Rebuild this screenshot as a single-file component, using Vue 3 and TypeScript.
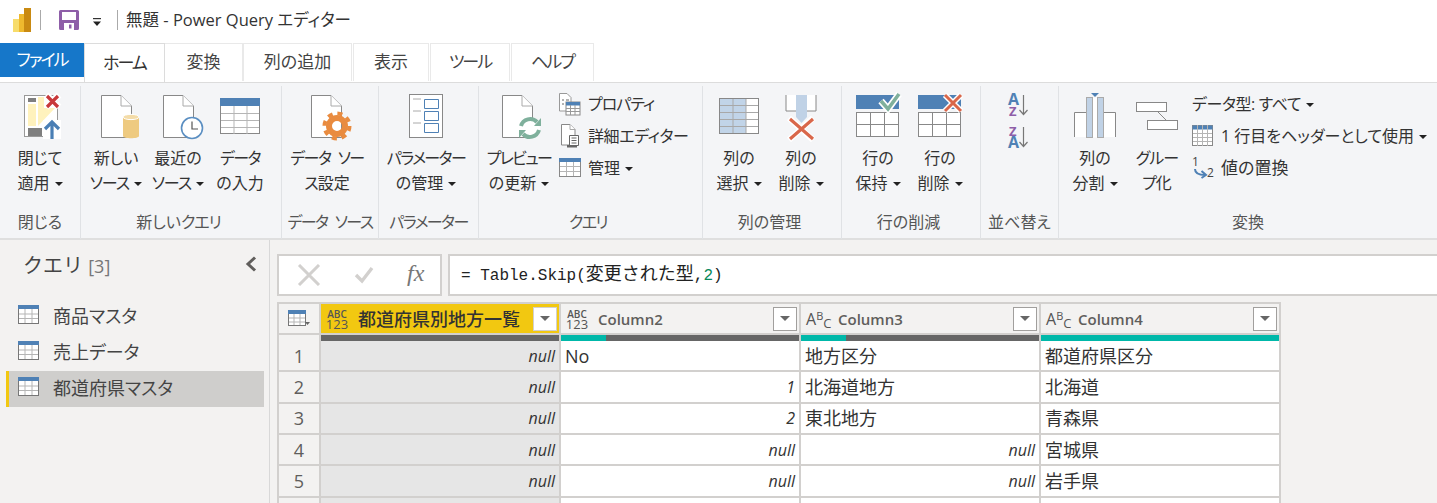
<script setup lang="ts">
interface Row { no: number; a: string; b: string; c: string; d: string }

const queries = ['商品マスタ', '売上データ', '都道府県マスタ']

const rows: Row[] = [
  { no: 1, a: 'null', b: 'No', c: '地方区分', d: '都道府県区分' },
  { no: 2, a: 'null', b: '1', c: '北海道地方', d: '北海道' },
  { no: 3, a: 'null', b: '2', c: '東北地方', d: '青森県' },
  { no: 4, a: 'null', b: 'null', c: 'null', d: '宮城県' },
  { no: 5, a: 'null', b: 'null', c: 'null', d: '岩手県' },
  { no: 6, a: '', b: '', c: '', d: '' },
]

const isNum = (v: string) => v === 'null' || /^\d+$/.test(v)
</script>

<template>
  <div class="app">
    <div class="titlebar">
      <svg class="logo" width="20" height="26" viewBox="0 0 20 26">
        <rect x="0" y="11" width="9" height="13" fill="#f7dc6b" />
        <rect x="6" y="6" width="8" height="18" fill="#eeb92e" />
        <rect x="11" y="0" width="7" height="24" fill="#c98a12" />
      </svg>
      <i class="tsep"></i>
      <svg class="save" width="20" height="20" viewBox="0 0 20 20">
        <path d="M0 1.500A1.500 1.500 0 0 1 1.500 0H18.500A1.500 1.500 0 0 1 20 1.500V18.500A1.500 1.500 0 0 1 18.500 20H1.500A1.500 1.500 0 0 1 0 18.500Z" fill="#8e5ea8" />
        <rect x="3" y="2" width="14" height="8" fill="#fff" />
        <rect x="5" y="13" width="10" height="7" fill="#fff" />
        <rect x="10" y="14.500" width="2.500" height="4" fill="#8e5ea8" />
      </svg>
      <svg class="qat" width="10" height="9" viewBox="0 0 10 9">
        <rect x="1" y="0" width="8" height="1.200" fill="#333" />
        <path d="M1 3.500H9L5 8Z" fill="#222" />
      </svg>
      <i class="tsep second"></i>
      <span class="title">無題 - Power Query エディター</span>
    </div>

    <div class="tabs">
      <div class="tab file"><span class="kk">ファイル</span></div>
      <div class="tab active"><span class="kk">ホーム</span></div>
      <div class="tab t2">変換</div>
      <div class="tab t3">列の追加</div>
      <div class="tab t4">表示</div>
      <div class="tab t5"><span class="kk">ツール</span></div>
      <div class="tab t6"><span class="kk">ヘルプ</span></div>
    </div>

    <div class="ribbon">
      <section class="group" style="width: 81px">
        <div class="items">
          <div class="big wide">
            <svg class="ico s3" width="38" height="46" viewBox="0 0 38 46">
              <rect x="0.500" y="2.500" width="33" height="41" fill="#fff" stroke="#999" />
              <rect x="4" y="5" width="8" height="4" fill="#7f7f7f" />
              <path d="M4 11H12V33H4ZM14 4H20V15H31L14 33Z" fill="#fff2bd" />
              <rect x="4" y="35" width="14" height="8" fill="#7f7f7f" />
              <path d="M22 2L35 14M35 2L22 14" stroke="#fff" stroke-width="7" />
              <path d="M23 3L34 14M34 3L23 14" stroke="#c8383a" stroke-width="3.200" />
              <rect x="19" y="27" width="18" height="19" fill="#fff" />
              <path d="M28 46V29M21 36L28 29L35 36" fill="none" stroke="#4a7fb5" stroke-width="3.200" />
            </svg>
            <span>閉じて<br />適用<b class="caret"></b></span>
          </div>
        </div>
        <footer>閉じる</footer>
      </section>

      <section class="group" style="width: 201px">
        <div class="items pl4">
          <div class="big">
            <svg class="ico s5" width="42" height="46" viewBox="0 0 42 46">
              <path d="M1.500 2.500H21L31.500 13V44.500H1.500Z" fill="#fff" stroke="#888" />
              <path d="M21 2.500V13H31.500" fill="#fff" stroke="#aaa" />
              <path d="M23 24C23 21 39 21 39 24V43C39 46 23 46 23 43Z" fill="#eeca80" />
              <ellipse cx="31" cy="24" rx="8" ry="2.600" fill="#f4dca8" stroke="#fff" />
            </svg>
            <span>新しい<br /><span class="k1">ソース</span><b class="caret"></b></span>
          </div>
          <div class="big">
            <svg class="ico s5" width="42" height="46" viewBox="0 0 42 46">
              <path d="M1.500 2.500H21L31.500 13V44.500H1.500Z" fill="#fff" stroke="#888" />
              <path d="M21 2.500V13H31.500" fill="#fff" stroke="#aaa" />
              <circle cx="30" cy="35" r="10.500" fill="#fff" stroke="#5b8fc2" stroke-width="1.600" />
              <path d="M30 28.500V36H36" fill="none" stroke="#555" stroke-width="1.200" />
            </svg>
            <span>最近の<br /><span class="k1">ソース</span><b class="caret"></b></span>
          </div>
          <div class="big">
            <svg class="ico" width="40" height="46" viewBox="0 0 40 46">
              <rect x="0.500" y="6.500" width="39" height="34" fill="#fff" stroke="#888" />
              <rect x="0" y="5" width="40" height="8" fill="#4f81b5" />
              <path d="M14 13V41M27 13V41M1 20.500H39M1 27.500H39M1 34.500H39" stroke="#b5b5b5" />
            </svg>
            <span><span class="k">データ</span><br />の入力</span>
          </div>
        </div>
        <footer class="nudge">新しい<span class="k1">クエリ</span></footer>
      </section>

      <section class="group" style="width: 97px">
        <div class="items pl5">
          <div class="big wide">
            <svg class="ico s4" width="42" height="46" viewBox="0 0 42 46">
              <path d="M1.500 2.500H21L31.500 13V44.500H1.500Z" fill="#fff" stroke="#888" />
              <path d="M21 2.500V13H31.500" fill="#fff" stroke="#aaa" />
              <circle cx="27" cy="33" r="8" fill="none" stroke="#e98b3f" stroke-width="6" />
              <circle cx="27" cy="33" r="12.500" fill="none" stroke="#e98b3f" stroke-width="4" stroke-dasharray="5 4.820" />
            </svg>
            <span><span class="k sp">データ ソー</span><br /><span class="k1">ス</span>設定</span>
          </div>
        </div>
        <footer><span class="k sp">データ ソース</span></footer>
      </section>

      <section class="group" style="width: 100px">
        <div class="items pl7">
          <div class="big wide">
            <svg class="ico" width="34" height="46" viewBox="0 0 34 46">
              <rect x="0.500" y="1.500" width="33" height="43" fill="#fff" stroke="#888" />
              <path d="M4 6H12M4 18H12M4 30H12" stroke="#aaa" />
              <path d="M15.500 6.500H29.500V15.500H15.500ZM15.500 18.500H29.500V27.500H15.500ZM15.500 30.500H29.500V39.500H15.500Z" fill="#fff" stroke="#4f81b5" />
            </svg>
            <span><span class="k">パラメーター</span><br />の管理<b class="caret"></b></span>
          </div>
        </div>
        <footer><span class="k">パラメーター</span></footer>
      </section>

      <section class="group" style="width: 224px">
        <div class="items pl7">
          <div class="big mid">
            <svg class="ico s3" width="42" height="46" viewBox="0 0 42 46">
              <path d="M1.500 2.500H21L31.500 13V44.500H1.500Z" fill="#fff" stroke="#888" />
              <path d="M21 2.500V13H31.500" fill="#fff" stroke="#aaa" />
              <circle cx="29" cy="35" r="10" fill="#fff" />
              <path d="M20 33A9.500 9.500 0 0 1 36 29M38 37A9.500 9.500 0 0 1 22 41" fill="none" stroke="#7fb09c" stroke-width="4" />
              <path d="M33 33H40V25ZM25 37H18V45Z" fill="#7fb09c" />
            </svg>
            <span><span class="k">プレビュー</span><br />の更新<b class="caret"></b></span>
          </div>
          <div class="small-col">
            <div class="small">
              <svg width="22" height="22" viewBox="0 0 22 22">
                <path d="M0.500 0.500H8L12 4.500V18H0.500Z" fill="#fff" stroke="#999" />
                <path d="M3 7H5M7 7H10M3 11H5" stroke="#666" />
                <rect x="7" y="9" width="14" height="13" fill="#fff" stroke="#888" />
                <rect x="7" y="9" width="14" height="3.500" fill="#4f81b5" />
                <path d="M11.500 12V22M16 12V22M7 15.500H21M7 18.500H21" stroke="#999" />
              </svg>
              <span class="k1">プロパティ</span>
            </div>
            <div class="small">
              <svg class="adv" width="22" height="24" viewBox="0 0 22 24">
                <path d="M0.500 0.500H9L14 5.500V21H0.500Z" fill="#fff" stroke="#888" />
                <path d="M9 0.500V5.500H14" fill="#fff" stroke="#aaa" />
                <path d="M8.500 11.500H17.500V21.500H8.500Z" fill="#fff" stroke="#666" />
                <path d="M10.500 14H15.500M10.500 16.500H15.500M10.500 19H15.500" stroke="#666" />
                <rect x="6" y="21" width="10" height="2.500" fill="#666" />
              </svg>
              <span class="k0">詳細エディター</span>
            </div>
            <div class="small">
              <svg width="22" height="20" viewBox="0 0 22 20">
                <rect x="0.500" y="1.500" width="21" height="17" fill="#fff" stroke="#888" />
                <rect x="0" y="0" width="22" height="4" fill="#4f81b5" />
                <path d="M7.500 4V18M14.500 4V18M1 8.500H21M1 13.500H21" stroke="#b5b5b5" />
              </svg>
              <span>管理<b class="caret"></b></span>
            </div>
          </div>
        </div>
        <footer class="nudge"><span class="k">クエリ</span></footer>
      </section>

      <section class="group" style="width: 139px">
        <div class="items pl5">
          <div class="big">
            <svg class="ico" width="40" height="46" viewBox="0 0 40 46">
              <rect x="0.500" y="5.500" width="39" height="35" fill="#fff" stroke="#888" />
              <rect x="1" y="6" width="26" height="34" fill="#c1d4e8" />
              <path d="M14 6V40M27 6V40M1 12.500H39M1 19.500H39M1 26.500H39M1 33.500H39" stroke="#a8a8a8" />
            </svg>
            <span>列の<br />選択<b class="caret"></b></span>
          </div>
          <div class="big">
            <svg class="ico" width="32" height="46" viewBox="0 0 32 46">
              <path d="M1 2V18H31V2" fill="#fff" stroke="#888" />
              <path d="M11 2H22V24L16.500 30L11 24Z" fill="#c0d2e6" />
              <path d="M4 25L28 47M28 25L4 47" stroke="#fff" stroke-width="6" />
              <path d="M5 26L28 46M28 26L5 46" stroke="#d9674a" stroke-width="3.200" />
            </svg>
            <span>列の<br />削除<b class="caret"></b></span>
          </div>
        </div>
        <footer class="nudge">列の管理</footer>
      </section>

      <section class="group" style="width: 139px">
        <div class="items pl5">
          <div class="big">
            <svg class="ico" width="46" height="46" viewBox="0 0 46 46">
              <rect x="1" y="2" width="43" height="14" fill="#4f81b5" />
              <rect x="1.500" y="19.500" width="42" height="24" fill="#fff" stroke="#888" />
              <path d="M15.500 20V44M29.500 20V44M2 31.500H43" stroke="#888" />
              <path d="M26 8L33 16L44 1" fill="none" stroke="#fff" stroke-width="7" />
              <path d="M26 8L33 16L44 1" fill="none" stroke="#7fb09c" stroke-width="3.600" />
            </svg>
            <span>行の<br />保持<b class="caret"></b></span>
          </div>
          <div class="big">
            <svg class="ico" width="46" height="46" viewBox="0 0 46 46">
              <rect x="1" y="2" width="43" height="14" fill="#4f81b5" />
              <rect x="1.500" y="19.500" width="42" height="24" fill="#fff" stroke="#888" />
              <path d="M15.500 20V44M29.500 20V44M2 31.500H43" stroke="#888" />
              <path d="M28 2L44 18M44 2L28 18" stroke="#fff" stroke-width="6" />
              <path d="M28 2L44 18M44 2L28 18" stroke="#d9674a" stroke-width="3" />
            </svg>
            <span>行の<br />削除<b class="caret"></b></span>
          </div>
        </div>
        <footer class="nudge">行の削減</footer>
      </section>

      <section class="group" style="width: 78px">
        <div class="items sort">
          <svg width="22" height="24" viewBox="0 0 22 24">
            <text x="0" y="11.500" class="az blue">A</text>
            <text x="1" y="22.500" class="az small-z purple">Z</text>
            <path d="M15.500 2V21M11.500 17L15.500 21.500L19.500 17" fill="none" stroke="#777" stroke-width="1.200" />
          </svg>
          <svg width="22" height="24" viewBox="0 0 22 24">
            <text x="1" y="10.500" class="az small-z purple">Z</text>
            <text x="0" y="22.500" class="az blue">A</text>
            <path d="M15.500 2V21M11.500 17L15.500 21.500L19.500 17" fill="none" stroke="#777" stroke-width="1.200" />
          </svg>
        </div>
        <footer>並べ替え</footer>
      </section>

      <section class="group last">
        <div class="items pl5">
          <div class="big">
            <svg class="ico" width="42" height="46" viewBox="0 0 42 46">
              <path d="M0.500 44V19.500H41.500V44" fill="#fff" stroke="#888" />
              <rect x="12.500" y="4.500" width="17" height="40" fill="#fff" />
              <rect x="12.500" y="4.500" width="6" height="40" fill="#c0d2e6" stroke="#aaa" />
              <rect x="23.500" y="4.500" width="6" height="40" fill="#c0d2e6" stroke="#aaa" />
              <path d="M17 0H25L21 4Z" fill="#4f81b5" />
            </svg>
            <span>列の<br />分割<b class="caret"></b></span>
          </div>
          <div class="big">
            <svg class="ico" width="42" height="46" viewBox="0 0 42 46">
              <rect x="0.500" y="9.500" width="30" height="9" fill="#fff" stroke="#888" />
              <rect x="11.500" y="27.500" width="30" height="9" fill="#fff" stroke="#888" />
              <path d="M22 19L30 27" stroke="#888" />
            </svg>
            <span><span class="k1">グルー</span><br /><span class="k1">プ</span>化</span>
          </div>
          <div class="small-col right">
            <div class="small"><span class="k0">データ型: すべて<b class="caret"></b></span></div>
            <div class="small">
              <svg width="22" height="22" viewBox="0 0 22 22">
                <rect x="0.500" y="0.500" width="20" height="20" fill="#fff" stroke="#888" />
                <rect x="0.500" y="0.500" width="20" height="4" fill="#4f81b5" />
                <path d="M5.500 0V21M10.500 0V21M15.500 0V21M1 8.500H20M1 12.500H20M1 16.500H20" stroke="#b5b5b5" />
              </svg>
              <span>1 行目をヘッダーとして使用<b class="caret"></b></span>
            </div>
            <div class="small replace">
              <svg width="24" height="24" viewBox="0 0 24 24">
                <text x="0" y="10" class="digit">1</text>
                <text x="15" y="21" class="digit">2</text>
                <path d="M3 13C3 18 7 19 13 19" fill="none" stroke="#4f81b5" stroke-width="2" />
                <path d="M9.500 15L14 19L9.500 22" fill="none" stroke="#4f81b5" stroke-width="2" />
              </svg>
              <span class="wide-txt">値の置換</span>
            </div>
          </div>
        </div>
        <footer>変換</footer>
      </section>
    </div>

    <div class="body">
      <aside class="side">
        <div class="side-head">
          <span>クエリ <em>[3]</em></span>
          <svg width="12" height="16" viewBox="0 0 12 16">
            <path d="M10 1.500L3 8L10 14.500" fill="none" stroke="#605e5c" stroke-width="3" />
          </svg>
        </div>
        <ul class="qlist">
          <li v-for="(q, i) in queries" :key="q" :class="{ sel: i === 2 }">
            <svg width="22" height="19" viewBox="0 0 22 19">
              <rect x="0.500" y="0.500" width="20" height="18" fill="#fff" stroke="#777" />
              <rect x="0" y="0" width="21" height="4" fill="#4f81b5" />
              <path d="M7 4V18M14 4V18M1 9H20M1 13.500H20" stroke="#b5b5b5" />
            </svg>
            <span>{{ q }}</span>
          </li>
        </ul>
      </aside>

      <main class="main">
        <div class="fbar">
          <div class="fbtns">
            <svg width="24" height="22" viewBox="0 0 24 22">
              <path d="M2 1L22 21M22 1L2 21" stroke="#d2d0ce" stroke-width="3" />
            </svg>
            <svg width="20" height="18" viewBox="0 0 20 18">
              <path d="M2 9L8 15L18 2" fill="none" stroke="#d2d0ce" stroke-width="3.400" />
            </svg>
            <span class="fx">fx</span>
          </div>
          <div class="finput">= Table.Skip(<span class="cjk">変更された型</span>,<span class="num">2</span>)</div>
        </div>

        <div class="grid">
          <div class="hcell corner">
            <svg width="22" height="18" viewBox="0 0 22 18">
              <rect x="0.500" y="0.500" width="17" height="15" fill="#fff" stroke="#777" />
              <rect x="0" y="0" width="18" height="4" fill="#4f81b5" />
              <path d="M6 4V15M12 4V15M1 8H17M1 12H17" stroke="#b5b5b5" />
              <path d="M17 12H22L19.500 15Z" fill="#666" />
            </svg>
          </div>
          <div class="hcell selected">
            <span class="type any"><i>ABC</i><i>123</i></span>
            <span class="hname big-h">都道府県別地方一覧</span>
            <span class="drop"><b></b></span>
          </div>
          <div class="hcell">
            <span class="type any"><i>ABC</i><i>123</i></span>
            <span class="hname">Column2</span>
            <span class="drop"><b></b></span>
          </div>
          <div class="hcell">
            <span class="type txt">A<sup>B</sup><sub>C</sub></span>
            <span class="hname">Column3</span>
            <span class="drop"><b></b></span>
          </div>
          <div class="hcell">
            <span class="type txt">A<sup>B</sup><sub>C</sub></span>
            <span class="hname">Column4</span>
            <span class="drop"><b></b></span>
          </div>

          <div class="qcell blank"></div>
          <div class="qcell"></div>
          <div class="qcell"><i class="ok" style="width: 19%"></i></div>
          <div class="qcell"><i class="ok" style="width: 19%"></i></div>
          <div class="qcell"><i class="ok" style="width: 100%"></i></div>

          <template v-for="r in rows" :key="r.no">
            <div class="cell rowno">{{ r.no === 6 ? '' : r.no }}</div>
            <div class="cell sel-col" :class="{ nul: r.a === 'null' }">{{ r.a }}</div>
            <div class="cell" :class="{ nul: isNum(r.b) }">{{ r.b }}</div>
            <div class="cell" :class="{ nul: isNum(r.c) }">{{ r.c }}</div>
            <div class="cell" :class="{ nul: isNum(r.d) }">{{ r.d }}</div>
          </template>
        </div>
      </main>
    </div>
  </div>
</template>

<style>
html, body {
  margin: 0;
  background: #fff;
}
</style>

<style scoped>
.app {
  width: 1437px;
  height: 503px;
  overflow: hidden;
  display: flex;
  flex-direction: column;
  font-family: "Open Sans", "Noto Sans CJK JP", sans-serif;
  font-feature-settings: "palt";
  font-size: 16px;
  color: #333;
}

.k { letter-spacing: -1.6px; }
.k1 { letter-spacing: -1px; }
.k0 { letter-spacing: -0.4px; }
.kk { letter-spacing: -2px; }
.sp { word-spacing: 5px; }
.wide-txt { font-size: 17px; }

.titlebar {
  height: 43px;
  flex: none;
  display: flex;
  align-items: center;
  background: #fff;
  padding-left: 13px;
  box-sizing: border-box;
}
.logo { margin-top: -2px; }
.tsep {
  width: 1px;
  height: 20px;
  background: #aaa;
  margin: -4px 0 0 7px;
}
.tsep.second { margin-left: 15px; }
.save { margin: -3px 0 0 18px; }
.qat { margin: 2px 0 0 13px; }
.title {
  margin: -3px 0 0 8px;
  color: #333;
  font-size: 16.500px;
  line-height: 24px;
}

.tabs {
  height: 39px;
  flex: none;
  display: flex;
  align-items: flex-start;
  background: #fff;
  position: relative;
  font-size: 17px;
}
.tab {
  height: 38px;
  box-sizing: border-box;
  border: 1px solid #e9e9e9;
  border-bottom: none;
  display: flex;
  align-items: center;
  justify-content: center;
  color: #444;
  line-height: 24px;
  margin-right: 1px;
  padding-bottom: 1px;
}
.tab.file {
  width: 84px;
  height: 34px;
  background: #1677c9;
  border: none;
  color: #fff;
  margin: 0;
}
.tab.active {
  width: 81px;
  height: 39px;
  border-color: #dcdcdc;
  margin: 0;
  position: relative;
  z-index: 2;
  background: #fff;
  color: #333;
}
.t2 { width: 78px; border-left: none; margin-right: 0; }
.t3 { width: 109px; }
.t4 { width: 76px; }
.t5 { width: 80px; }
.t6 { width: 83px; }

.ribbon {
  height: 158px;
  flex: none;
  display: flex;
  background: #f4f5f7;
  border-top: 1px solid #dcdcdc;
  border-bottom: 2px solid #dfdfdf;
  box-sizing: border-box;
  padding: 3px 0 0;
}
.group {
  box-sizing: border-box;
  border-right: 1px solid #e0e2e5;
  height: 153px;
  display: flex;
  flex-direction: column;
  flex: none;
}
.group.last { border-right: none; flex: 1; }
.items {
  height: 123px;
  display: flex;
  align-items: flex-start;
  flex: none;
}
.pl4 { padding-left: 4px; }
.pl5 { padding-left: 5px; }
.pl7 { padding-left: 7px; }
.group footer {
  height: 30px;
  text-align: center;
  line-height: 26px;
  color: #555;
  flex: none;
}
.group footer.nudge { padding-right: 5px; }
.big {
  width: 62px;
  flex: none;
  display: flex;
  flex-direction: column;
  align-items: center;
  text-align: center;
  line-height: 25px;
  color: #333;
  white-space: nowrap;
}
.big.wide { width: 80px; }
.big.mid { width: 66px; }
.ico {
  height: 46px;
  margin: 7px 0 7px;
  display: block;
  overflow: visible;
}
.ico.s3 { margin-left: 6px; }
.ico.s4 { margin-left: 8px; }
.ico.s5 { margin-left: 10px; }
.caret {
  display: inline-block;
  width: 0;
  height: 0;
  border: 4px solid transparent;
  border-top: 4px solid #222;
  border-bottom: none;
  margin-left: 5px;
  vertical-align: 3px;
}

.small-col {
  display: flex;
  flex-direction: column;
  margin-left: 7px;
  padding-top: 2px;
}
.small-col.right { margin-left: 4px; }
.small {
  height: 32px;
  display: flex;
  align-items: center;
  gap: 7px;
  white-space: nowrap;
  color: #333;
  line-height: 24px;
}
.small svg { flex: none; overflow: visible; }
.small .adv { margin-left: 2px; margin-right: -2px; }
.small.replace { gap: 5px; }

.sort {
  flex-direction: column;
  align-items: flex-start;
  gap: 8px;
  padding: 7px 0 0 27px;
  box-sizing: border-box;
}
.sort svg { overflow: visible; }
.az {
  font-family: "Open Sans", sans-serif;
  font-weight: 700;
  font-size: 16px;
}
.az.small-z { font-size: 13px; }
.blue { fill: #4f81b5; }
.purple { fill: #8e5ea8; }
.digit {
  font-family: "Open Sans", sans-serif;
  font-size: 12px;
  fill: #444;
}

.body {
  flex: 1;
  display: flex;
  min-height: 0;
  background: #f3f2f1;
}
.side {
  width: 270px;
  flex: none;
  box-sizing: border-box;
  border-right: 1px solid #d8d8d8;
  background: #f3f2f1;
}
.side-head {
  height: 48px;
  padding: 0 12px 0 23px;
  display: flex;
  align-items: center;
  justify-content: space-between;
  font-size: 20px;
  font-feature-settings: normal;
  color: #444;
}
.side-head em {
  font-style: normal;
  color: #777;
  font-size: 18px;
}
.qlist {
  list-style: none;
  margin: 11px 0 0;
  padding: 0;
}
.qlist li {
  height: 36px;
  width: 258px;
  margin-left: 6px;
  box-sizing: border-box;
  border-left: 3px solid transparent;
  padding-left: 9px;
  display: flex;
  align-items: center;
  gap: 13px;
  color: #444;
  font-size: 18px;
  line-height: 24px;
}
.qlist li span { margin-top: -2px; }
.qlist li svg { margin-top: -6px; }
.qlist li.sel {
  background: #cfcecc;
  border-left-color: #f2c811;
}

.main {
  flex: 1;
  min-width: 0;
  padding: 14px 0 0 7px;
}
.fbar {
  display: flex;
  height: 42px;
  gap: 6px;
}
.fbtns {
  width: 165px;
  box-sizing: border-box;
  border: 2px solid #d2d0ce;
  background: #fff;
  display: flex;
  align-items: center;
  padding-left: 18px;
  gap: 33px;
  flex: none;
}
.fx {
  font-family: "Liberation Serif", serif;
  font-style: italic;
  font-size: 24px;
  color: #777;
  line-height: 22px;
  margin-top: -4px;
}
.finput {
  flex: 1;
  box-sizing: border-box;
  border: 2px solid #d2d0ce;
  border-right: none;
  background: #fff;
  padding: 2px 0 0 11px;
  font-family: "Liberation Mono", monospace;
  font-size: 16px;
  line-height: 36px;
  color: #222;
}
.finput .cjk {
  font-family: "Noto Sans CJK JP", sans-serif;
  font-size: 18px;
  font-feature-settings: normal;
  line-height: 20px;
}
.finput .num { color: #09885a; }

.grid {
  display: grid;
  grid-template-columns: 42px 240px 240px 240px 240px;
  grid-template-rows: 31px 6px;
  grid-auto-rows: 31.330px;
  width: 1004px;
  margin-top: 6px;
  border-top: 2px solid #d2d0ce;
  border-left: 2px solid #d2d0ce;
  box-sizing: border-box;
  background: #d2d0ce;
}
.hcell {
  box-sizing: border-box;
  background: #f3f2f1;
  border-right: 2px solid #d2d0ce;
  border-bottom: 2px solid #d2d0ce;
  display: flex;
  align-items: center;
  padding: 0 2px 0 5px;
  min-width: 0;
}
.corner { justify-content: center; padding: 0; }
.hcell.selected {
  background: #f2c811;
  color: #333;
}
.type {
  flex: none;
  width: 22px;
  color: #555;
  font-family: "Open Sans", sans-serif;
}
.type.any {
  display: flex;
  flex-direction: column;
  align-items: center;
  font-size: 10px;
  line-height: 10px;
  font-weight: 600;
}
.type.any i { font-style: normal; }
.type.any i:last-child { font-size: 13px; font-weight: 400; }
.type.txt {
  font-size: 16px;
  line-height: 20px;
  white-space: nowrap;
}
.type.txt sup { font-size: 11px; vertical-align: 5px; line-height: 0; }
.type.txt sub { font-size: 13px; vertical-align: -3px; line-height: 0; }
.hname {
  flex: 1;
  margin-left: 10px;
  font-weight: 600;
  font-size: 15px;
  color: #605e5c;
  white-space: nowrap;
}
.hname.big-h {
  font-size: 18px;
  font-weight: 500;
  color: #333;
  line-height: 24px;
}
.drop {
  flex: none;
  width: 24px;
  height: 24px;
  box-sizing: border-box;
  background: #fff;
  border: 1px solid #a19f9d;
  display: flex;
  align-items: center;
  justify-content: center;
}
.selected .drop { border-color: #d2d0ce; }
.drop b {
  width: 0;
  height: 0;
  border: 5px solid transparent;
  border-top: 5px solid #666;
  border-bottom: none;
}
.qcell {
  background: #666;
  border-right: 2px solid #d2d0ce;
}
.qcell.blank {
  background: #f3f2f1;
}
.qcell .ok {
  display: block;
  height: 100%;
  background: #00b8a9;
}
.cell {
  box-sizing: border-box;
  background: #fff;
  border-right: 2px solid #d2d0ce;
  border-bottom: 2px solid #d2d0ce;
  padding: 0 4px;
  display: flex;
  align-items: center;
  color: #333;
  font-size: 18px;
  line-height: 24px;
  white-space: nowrap;
}
.cell.nul {
  justify-content: flex-end;
  font-style: italic;
  font-size: 16px;
}
.rowno {
  justify-content: center;
  background: #f3f2f1;
  color: #605e5c;
}
.sel-col { background: #e6e6e6; }
</style>
